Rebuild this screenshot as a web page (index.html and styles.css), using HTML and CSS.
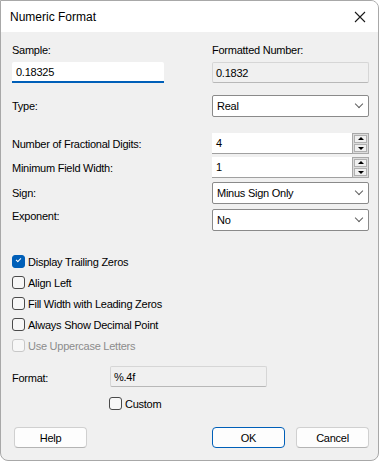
FILE: index.html
```html
<!DOCTYPE html>
<html lang="en">
<head>
  <meta charset="UTF-8">
  <title>Numeric Format</title>
  <link rel="stylesheet" href="styles.css">
</head>
<body>
  <div class="window">
    <div class="titlebar">
      <span class="title">Numeric Format</span>
      <svg class="close" width="12" height="12" viewBox="0 0 12 12">
        <path d="M1 1 L11 11 M11 1 L1 11" stroke="#1a1a1a" stroke-width="1.1" fill="none"/>
      </svg>
    </div>

    <div class="content">
      <div class="pair">
        <div class="col">
          <label>Sample:</label>
          <div class="edit active">0.18325</div>
        </div>
        <div class="col">
          <label>Formatted Number:</label>
          <div class="edit readonly">0.1832</div>
        </div>
      </div>

      <div class="row type-row">
        <label>Type:</label>
        <div class="combo">Real<span class="chev"></span></div>
      </div>

      <div class="row digits-row">
        <label>Number of Fractional Digits:</label>
        <div class="spin">
          <div class="spin-value">4</div>
          <div class="spin-btns"><span class="up"></span><span class="down"></span></div>
        </div>
      </div>
      <div class="row width-row">
        <label>Minimum Field Width:</label>
        <div class="spin">
          <div class="spin-value">1</div>
          <div class="spin-btns"><span class="up"></span><span class="down"></span></div>
        </div>
      </div>
      <div class="row sign-row">
        <label>Sign:</label>
        <div class="combo">Minus Sign Only<span class="chev"></span></div>
      </div>
      <div class="row exp-row">
        <label class="exp-label">Exponent:</label>
        <div class="combo">No<span class="chev"></span></div>
      </div>

      <div class="checks">
        <div class="check"><span class="box checked"></span>Display Trailing Zeros</div>
        <div class="check"><span class="box"></span>Align Left</div>
        <div class="check"><span class="box"></span>Fill Width with Leading Zeros</div>
        <div class="check"><span class="box"></span>Always Show Decimal Point</div>
        <div class="check disabled"><span class="box"></span>Use Uppercase Letters</div>
      </div>

      <div class="format-row">
        <label>Format:</label>
        <div class="edit readonly format">%.4f</div>
      </div>
      <div class="check custom"><span class="box"></span>Custom</div>

      <div class="buttons">
        <button class="btn">Help</button>
        <div class="right-btns">
          <button class="btn default">OK</button>
          <button class="btn">Cancel</button>
        </div>
      </div>
    </div>
  </div>
</body>
</html>
```

FILE: styles.css
```css
body {
  margin: 0;
  background: #ffffff;
  font-family: "Liberation Sans", Arial, sans-serif;
  font-size: 11px;
  letter-spacing: -0.25px;
  color: #000;
}
.window {
  width: 377px;
  height: 459px;
  border: 1px solid #a8a8a8;
  border-radius: 0 8px 8px 8px;
  background: #f0f0f0;
  overflow: hidden;
}
.titlebar {
  height: 31px;
  background: #ffffff;
  display: flex;
  align-items: center;
  justify-content: space-between;
  padding: 0 10px 0 9px;
}
.title {
  font-size: 12px;
  letter-spacing: 0;
  color: #000;
}
.close {
  margin-right: 2px;
}
.content {
  padding: 11px 9px 0 11px;
}
label {
  display: block;
  line-height: 14px;
  color: #000;
}
.pair {
  display: flex;
  justify-content: space-between;
}
.col {
  display: flex;
  flex-direction: column;
  gap: 5px;
}
.col:first-child {
  width: 152px;
}
.col:last-child {
  width: 157px;
}
.edit {
  height: 21px;
  line-height: 20px;
  padding: 0 4px;
  box-sizing: border-box;
}
.edit.active {
  background: #fff;
  border-bottom: 2px solid #005fb8;
  border-radius: 2px 2px 0 0;
}
.edit.readonly {
  background: #f0f0f0;
  border: 1px solid #d6d6d6;
  border-bottom-color: #b8b8b8;
  border-radius: 2px;
  padding: 0 3px;
}
.row {
  display: flex;
  align-items: center;
  justify-content: space-between;
}
.type-row { margin-top: 12px; }
.digits-row { margin-top: 16px; }
.width-row { margin-top: 3px; }
.sign-row { margin-top: 4px; }
.exp-row { margin-top: 5px; }
.exp-label { margin-top: -8px; }
.combo {
  width: 157px;
  height: 22px;
  box-sizing: border-box;
  background: #fff;
  border: 1px solid #8a8a8a;
  border-radius: 2px;
  padding: 0 4px;
  line-height: 20px;
  position: relative;
}
.chev {
  position: absolute;
  right: 6px;
  top: 5px;
  width: 5px;
  height: 5px;
  border-right: 1px solid #606060;
  border-bottom: 1px solid #606060;
  transform: rotate(45deg);
}
.spin {
  width: 157px;
  height: 21px;
  display: flex;
}
.spin-value {
  flex: 1;
  background: #fff;
  border-bottom: 1px solid #a0a0a0;
  line-height: 20px;
  padding: 0 4px;
}
.spin-btns {
  width: 17px;
  display: flex;
  flex-direction: column;
  border: 1px solid #a8a8a8;
  box-sizing: border-box;
  background: #dcdcdc;
  padding: 1px;
  gap: 1px;
}
.spin-btns span {
  flex: 1;
  background: #f0f0f0;
  border: 1px solid #b0b0b0;
  position: relative;
}
.spin-btns span::after {
  content: "";
  position: absolute;
  left: 50%;
  top: 50%;
  margin-left: -3px;
  border-left: 3px solid transparent;
  border-right: 3px solid transparent;
}
.spin-btns .up::after {
  margin-top: -2px;
  border-bottom: 3px solid #000;
}
.spin-btns .down::after {
  margin-top: -1px;
  border-top: 3px solid #000;
}
.checks {
  margin-top: 20px;
}
.check {
  height: 21px;
  display: flex;
  align-items: center;
  gap: 3px;
}
.box {
  width: 13px;
  height: 13px;
  box-sizing: border-box;
  border: 1px solid #4a4a4a;
  border-radius: 3px;
  background: #f7f7f7;
  position: relative;
}
.box.checked {
  background: #005fb8;
  border-color: #005fb8;
}
.box.checked::after {
  content: "";
  position: absolute;
  left: 3px;
  top: 2px;
  width: 4px;
  height: 2px;
  border-left: 1px solid #fff;
  border-bottom: 1px solid #fff;
  transform: rotate(-45deg);
}
.check.disabled {
  color: #8c8c8c;
}
.check.disabled .box {
  border-color: #c8c8c8;
}
.format-row {
  margin-top: 10px;
  display: flex;
  align-items: center;
}
.format-row label {
  width: 98px;
  margin-top: 2px;
}
.edit.format {
  width: 157px;
}
.check.custom {
  margin-top: 6px;
  margin-left: 97px;
}
.buttons {
  margin-top: 13px;
  display: flex;
  justify-content: space-between;
  padding-left: 2px;
}
.right-btns {
  display: flex;
  gap: 11px;
}
.btn {
  width: 73px;
  height: 21px;
  font-family: "Liberation Sans", Arial, sans-serif;
  font-size: 11px;
  letter-spacing: -0.25px;
  background: #fdfdfd;
  border: 1px solid #d0d0d0;
  border-bottom-color: #b4b4b4;
  border-radius: 4px;
  color: #000;
  padding: 0;
}
.btn.default {
  border-color: #005fb8;
}
```
